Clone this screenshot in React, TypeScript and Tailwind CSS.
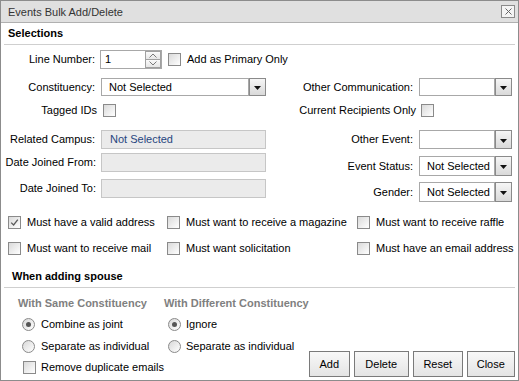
import React from "react";

const Checkbox = ({ checked }: { checked?: boolean }) => (
  <span className="w-[13px] h-[13px] shrink-0 border border-[#8a8a8a] bg-linear-to-br from-[#dadada] to-[#ffffff] flex items-center justify-center">
    {checked && (
      <svg width="9" height="9" viewBox="0 0 9 9">
        <path d="M1.2 4.6 L3.6 7 L7.8 1.6" stroke="#5a5a5a" strokeWidth="1.3" fill="none" />
      </svg>
    )}
  </span>
);

const Radio = ({ checked }: { checked?: boolean }) => (
  <span className="w-[13px] h-[13px] shrink-0 rounded-full border border-[#8a8a8a] bg-linear-to-br from-[#d8d8d8] to-[#ffffff] flex items-center justify-center">
    {checked && <span className="w-[5px] h-[5px] rounded-full bg-[#555555]" />}
  </span>
);

const DropBtn = () => (
  <span className="w-[17px] h-full shrink-0 border border-[#8a8a8a] bg-linear-to-b from-[#f6f6f6] to-[#d9d9d9] flex items-center justify-center">
    <svg width="7" height="4" viewBox="0 0 7 4" className="mt-[2px]">
      <path d="M0 0 H7 L3.5 4 Z" fill="#111" />
    </svg>
  </span>
);

const Select = ({ w, h, text }: { w: string; h: string; text?: string }) => (
  <div className={`flex ${w} ${h} shrink-0`}>
    <div className="flex-1 min-w-0 h-full border border-[#a8a8a8] bg-white flex items-center pl-[7px] text-black whitespace-nowrap overflow-hidden">
      {text}
    </div>
    <DropBtn />
  </div>
);

const Button = ({ w, label }: { w: string; label: string }) => (
  <div
    className={`${w} h-[26px] shrink-0 border border-[#7a7a7a] bg-linear-to-b from-[#f8f8f8] to-[#e4e4e4] flex items-center justify-center text-black`}
  >
    {label}
  </div>
);

export default function App() {
  return (
    <div className="w-[519px] h-[381px] border border-[#8c8c8c] bg-white font-['Liberation_Sans',Arial,sans-serif] text-[11px] leading-none text-black flex flex-col overflow-hidden">
      {/* Title bar */}
      <div className="h-[22px] shrink-0 bg-[#e0e0e0] border-b border-[#b0b0b0] flex items-center justify-between pl-[7px] pr-[3px] text-[#333333]">
        <span className="pt-[1px]">Events Bulk Add/Delete</span>
        <span className="w-[14px] h-[13px] border border-[#8a8a8a] bg-[#f4f4f4] flex items-center justify-center">
          <svg width="7" height="7" viewBox="0 0 7 7">
            <path d="M0.5 0.5 L6.5 6.5 M6.5 0.5 L0.5 6.5" stroke="#666" strokeWidth="1" />
          </svg>
        </span>
      </div>

      {/* Selections header */}
      <div className="h-[22px] shrink-0 mx-[3px] border-b border-[#cfcfcf] flex items-center pl-[4px] font-bold">
        Selections
      </div>

      {/* Two columns */}
      <div className="flex shrink-0">
        {/* Left column */}
        <div className="w-[269px] shrink-0 flex flex-col">
          <div className="mt-[5px] h-[19px] flex items-center">
            <span className="w-[94px] shrink-0 text-right whitespace-nowrap">Line Number:</span>
            <div className="ml-[5px] w-[62px] h-[19px] shrink-0 flex border border-[#a8a8a8] bg-white">
              <span className="flex-1 flex items-center pl-[4px]">1</span>
              <div className="w-[16px] flex flex-col">
                <span className="flex-1 border border-[#a0a0a0] bg-linear-to-b from-[#fafafa] to-[#e6e6e6] flex items-center justify-center">
                  <svg width="8" height="5" viewBox="0 0 8 5">
                    <path d="M0.5 4.5 L4 1 L7.5 4.5" stroke="#7a7a7a" fill="none" />
                  </svg>
                </span>
                <span className="flex-1 border border-t-0 border-[#a0a0a0] bg-linear-to-b from-[#fafafa] to-[#e6e6e6] flex items-center justify-center">
                  <svg width="8" height="5" viewBox="0 0 8 5">
                    <path d="M0.5 0.5 L4 4 L7.5 0.5" stroke="#7a7a7a" fill="none" />
                  </svg>
                </span>
              </div>
            </div>
            <span className="ml-[6px] shrink-0">
              <Checkbox />
            </span>
            <span className="ml-[6px] shrink-0 whitespace-nowrap">Add as Primary Only</span>
          </div>

          <div className="mt-[9px] h-[18px] flex items-center">
            <span className="w-[94px] shrink-0 text-right">Constituency:</span>
            <div className="ml-[6px] shrink-0">
              <Select w="w-[165px]" h="h-[18px]" text="Not Selected" />
            </div>
          </div>

          <div className="mt-[8px] h-[13px] flex items-center">
            <span className="w-[96px] shrink-0 text-right">Tagged IDs</span>
            <span className="ml-[6px] shrink-0">
              <Checkbox />
            </span>
          </div>

          <div className="mt-[13px] h-[19px] flex items-center">
            <span className="w-[94px] shrink-0 text-right whitespace-nowrap">Related Campus:</span>
            <div className="ml-[6px] w-[165px] h-[19px] shrink-0 border border-[#c6c6c6] bg-[#ebebeb] flex items-center pl-[8px] text-[#27467f]">
              Not Selected
            </div>
          </div>

          <div className="mt-[4px] h-[19px] flex items-center">
            <span className="w-[95px] shrink-0 text-right whitespace-nowrap">Date Joined From:</span>
            <div className="ml-[5px] w-[165px] h-[19px] shrink-0 border border-[#c6c6c6] bg-[#ebebeb]" />
          </div>

          <div className="mt-[7px] h-[19px] flex items-center">
            <span className="w-[95px] shrink-0 text-right whitespace-nowrap">Date Joined To:</span>
            <div className="ml-[5px] w-[165px] h-[19px] shrink-0 border border-[#c6c6c6] bg-[#ebebeb]" />
          </div>
        </div>

        {/* Right column */}
        <div className="flex-1 flex flex-col">
          <div className="mt-[33px] h-[18px] flex items-center">
            <span className="w-[143px] shrink-0 text-right whitespace-nowrap">Other Communication:</span>
            <div className="ml-[6px] shrink-0">
              <Select w="w-[93px]" h="h-[18px]" />
            </div>
          </div>

          <div className="mt-[8px] h-[13px] flex items-center">
            <span className="w-[146px] shrink-0 text-right whitespace-nowrap">Current Recipients Only</span>
            <span className="ml-[5px] shrink-0">
              <Checkbox />
            </span>
          </div>

          <div className="mt-[13px] h-[19px] flex items-center">
            <span className="w-[143px] shrink-0 text-right">Other Event:</span>
            <div className="ml-[6px] shrink-0">
              <Select w="w-[93px]" h="h-[19px]" />
            </div>
          </div>

          <div className="mt-[7px] h-[20px] flex items-center">
            <span className="w-[143px] shrink-0 text-right">Event Status:</span>
            <div className="ml-[6px] shrink-0">
              <Select w="w-[93px]" h="h-[20px]" text="Not Selected" />
            </div>
          </div>

          <div className="mt-[6px] h-[20px] flex items-center">
            <span className="w-[143px] shrink-0 text-right">Gender:</span>
            <div className="ml-[6px] shrink-0">
              <Select w="w-[93px]" h="h-[20px]" text="Not Selected" />
            </div>
          </div>
        </div>
      </div>

      {/* Checkbox rows */}
      <div className="mt-[11px] h-[18px] shrink-0 flex items-center pl-[7px]">
        <div className="w-[159px] shrink-0 flex items-center gap-[6px]">
          <Checkbox checked />
          <span className="whitespace-nowrap">Must have a valid address</span>
        </div>
        <div className="w-[190px] shrink-0 flex items-center gap-[6px]">
          <Checkbox />
          <span className="whitespace-nowrap">Must want to receive a magazine</span>
        </div>
        <div className="shrink-0 flex items-center gap-[6px]">
          <Checkbox />
          <span className="whitespace-nowrap">Must want to receive raffle</span>
        </div>
      </div>
      <div className="mt-[8px] h-[18px] shrink-0 flex items-center pl-[7px]">
        <div className="w-[159px] shrink-0 flex items-center gap-[6px]">
          <Checkbox />
          <span className="whitespace-nowrap">Must want to receive mail</span>
        </div>
        <div className="w-[190px] shrink-0 flex items-center gap-[6px]">
          <Checkbox />
          <span className="whitespace-nowrap">Must want solicitation</span>
        </div>
        <div className="shrink-0 flex items-center gap-[6px]">
          <Checkbox />
          <span className="whitespace-nowrap">Must have an email address</span>
        </div>
      </div>

      {/* When adding spouse */}
      <div className="mt-[7px] h-[24px] shrink-0 mx-[3px] border-b border-[#cfcfcf] flex items-center pt-[2px] pl-[8px] font-bold">
        When adding spouse
      </div>

      <div className="flex-1 flex">
        <div className="pl-[17px] shrink-0 flex flex-col">
          <div className="mt-[7px] h-[16px] flex items-center font-bold text-[#808080]">
            <span className="w-[146px] shrink-0 whitespace-nowrap">With Same Constituency</span>
            <span className="shrink-0 whitespace-nowrap">With Different Constituency</span>
          </div>
          <div className="mt-[5px] h-[16px] flex items-center">
            <div className="w-[146px] shrink-0 pl-[4px] flex items-center gap-[6px]">
              <Radio checked />
              <span className="whitespace-nowrap">Combine as joint</span>
            </div>
            <div className="shrink-0 pl-[4px] flex items-center gap-[5px]">
              <Radio checked />
              <span className="whitespace-nowrap">Ignore</span>
            </div>
          </div>
          <div className="mt-[6px] h-[16px] flex items-center">
            <div className="w-[146px] shrink-0 pl-[4px] flex items-center gap-[6px]">
              <Radio />
              <span className="whitespace-nowrap">Separate as individual</span>
            </div>
            <div className="shrink-0 pl-[4px] flex items-center gap-[5px]">
              <Radio />
              <span className="whitespace-nowrap">Separate as individual</span>
            </div>
          </div>
          <div className="mt-[5px] h-[16px] flex items-center pl-[5px] gap-[5px]">
            <Checkbox />
            <span className="whitespace-nowrap">Remove duplicate emails</span>
          </div>
        </div>

        <div className="ml-auto shrink-0 self-end mb-[3px] mr-[5px] flex gap-[4px]">
          <Button w="w-[41px]" label="Add" />
          <Button w="w-[55px]" label="Delete" />
          <Button w="w-[50px]" label="Reset" />
          <Button w="w-[48px]" label="Close" />
        </div>
      </div>
    </div>
  );
}
